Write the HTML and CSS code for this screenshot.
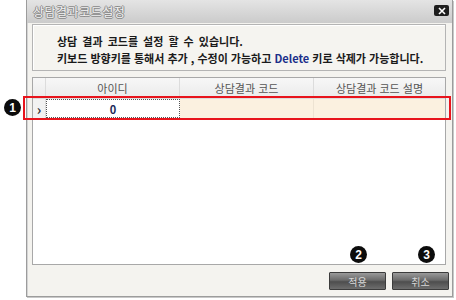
FILE: index.html
```html
<!DOCTYPE html>
<html lang="ko">
<head>
    <meta charset="UTF-8">
    <title>상담결과코드설정</title>
    <link rel="stylesheet" href="styles.css">
</head>
<body>
    <div class="window">
        <div class="titlebar">
            <span class="title">상담결과코드설정</span>
            <span class="close">
                <svg width="10" height="8" viewBox="0 0 10 8"><path d="M2 1 L8 7 M8 1 L2 7" stroke="#fff" stroke-width="1.6"/></svg>
            </span>
        </div>

        <div class="content">
            <div class="info">
                <p>상담 결과 코드를 설정 할 수 있습니다.</p>
                <p>키보드 방향키를 통해서 추가 , 수정이 가능하고 <span class="key">Delete</span> 키로 삭제가 가능합니다.</p>
            </div>

            <div class="grid">
                <div class="grid-row head">
                    <div class="cell rowhead"></div>
                    <div class="cell c1">아이디</div>
                    <div class="cell c2">상담결과 코드</div>
                    <div class="cell c3">상담결과 코드 설명</div>
                </div>
                <div class="grid-row data">
                    <div class="cell rowhead">›</div>
                    <div class="cell c1 editing">0</div>
                    <div class="cell c2"></div>
                    <div class="cell c3"></div>
                </div>
            </div>

            <div class="footer">
                <button class="btn">적용</button>
                <button class="btn">취소</button>
            </div>
        </div>
    </div>

    <!-- 설명용 표시 -->
    <div class="highlight"></div>
    <span class="badge b1">1</span>
    <span class="badge b2">2</span>
    <span class="badge b3">3</span>
</body>
</html>
```

FILE: styles.css
```css
body {
    margin: 0;
    padding: 0 0 0 26px;
    background: #fff;
    font-family: "Noto Sans CJK KR", "Noto Sans", sans-serif;
    position: relative;
    width: 430px;
    height: 300px;
}
.window {
    width: 425px;
    height: 296px;
    border: 1px solid #9c9c9c;
    border-top: none;
    box-shadow: inset 1px 0 0 #d4d4d4, 1px 1px 0 #c8c8c8;
    background: #f4f3ef;
    display: flex;
    flex-direction: column;
}
.titlebar {
    height: 23px;
    background: linear-gradient(#e4e4e4, #cbcbcb);
    display: flex;
    align-items: center;
    justify-content: space-between;
    padding: 0 3px 0 6px;
}
.title {
    font-size: 12px;
    color: #f2f2f2;
    letter-spacing: 0.5px;
    text-shadow: 1px 0 0 #8a8a8a, -1px 0 0 #8a8a8a, 0 1px 0 #8a8a8a, 0 -1px 0 #8a8a8a;
}
.close {
    width: 15px;
    height: 11px;
    background: #1e1e1e;
    border-radius: 2px;
    display: flex;
    align-items: center;
    justify-content: center;
    margin-top: -2px;
}
.content {
    flex: 1;
    display: flex;
    flex-direction: column;
    padding: 1px 6px 0 5px;
}
.info {
    border: 1px solid #b4b4b4;
    box-shadow: inset 1px 1px 0 #fff;
    background: #f5f4f0;
    padding: 8px 0 0 24px;
    box-sizing: border-box;
    height: 47px;
}
.info p {
    margin: 0;
    font-size: 11px;
    font-weight: bold;
    line-height: 17px;
    color: #1a1a1a;
}
.info p:first-child {
    word-spacing: 2px;
}
.info .key {
    color: #1c2f8a;
}
.grid {
    margin-top: 6px;
    height: 188px;
    border: 1px solid #a8a8a8;
    background: #fff;
    box-sizing: border-box;
}
.grid-row {
    display: flex;
    height: 19px;
}
.grid-row.head {
    background: linear-gradient(#f7f7f7, #ebebeb);
    border-bottom: 1px solid #dcdcdc;
    height: 21px;
    box-sizing: border-box;
}
.cell {
    font-size: 11px;
    color: #555;
    display: flex;
    align-items: center;
    justify-content: center;
    border-right: 1px solid #dcdcdc;
    box-sizing: border-box;
}
.rowhead { width: 13px; }
.c1 { width: 134px; }
.c2 { width: 134px; }
.c3 { flex: 1; border-right: none; }
.grid-row.data .cell {
    background: #fbf1e0;
    border-right-color: #ede3d2;
}
.grid-row.data .rowhead {
    background: #f2f2f2;
    color: #333;
    font-size: 14px;
    font-weight: bold;
    border-right-color: #dcdcdc;
}
.grid-row.data .editing {
    background: #fff;
    border: 1px dotted #555;
    font-weight: bold;
    color: #1c2a5a;
}
.footer {
    flex: 1;
    display: flex;
    justify-content: flex-end;
    align-items: flex-start;
    gap: 6px;
    padding: 7px 0 0;
}
.btn {
    width: 57px;
    height: 18px;
    padding: 0;
    border: 1px solid #3c3c3c;
    border-radius: 1px;
    background: linear-gradient(#9a9a9a, #6a6a6a 45%, #4e4e4e 55%, #6e6e6e);
    color: #d8d8d8;
    font-family: inherit;
    font-size: 10px;
    cursor: pointer;
}
.btn:last-child { margin-right: -3px; }

.highlight {
    position: absolute;
    left: 23px;
    top: 96px;
    width: 424px;
    height: 20px;
    border: 2px solid #e8141c;
}
.badge {
    position: absolute;
    width: 17px;
    height: 17px;
    border-radius: 50%;
    background: #0c0c0c;
    color: #fff;
    font-family: "Liberation Sans", sans-serif;
    font-size: 12px;
    font-weight: bold;
    display: flex;
    align-items: center;
    justify-content: center;
}
.b1 { left: 4px; top: 99px; }
.b2 { left: 350px; top: 246px; }
.b3 { left: 418px; top: 246px; }
```
